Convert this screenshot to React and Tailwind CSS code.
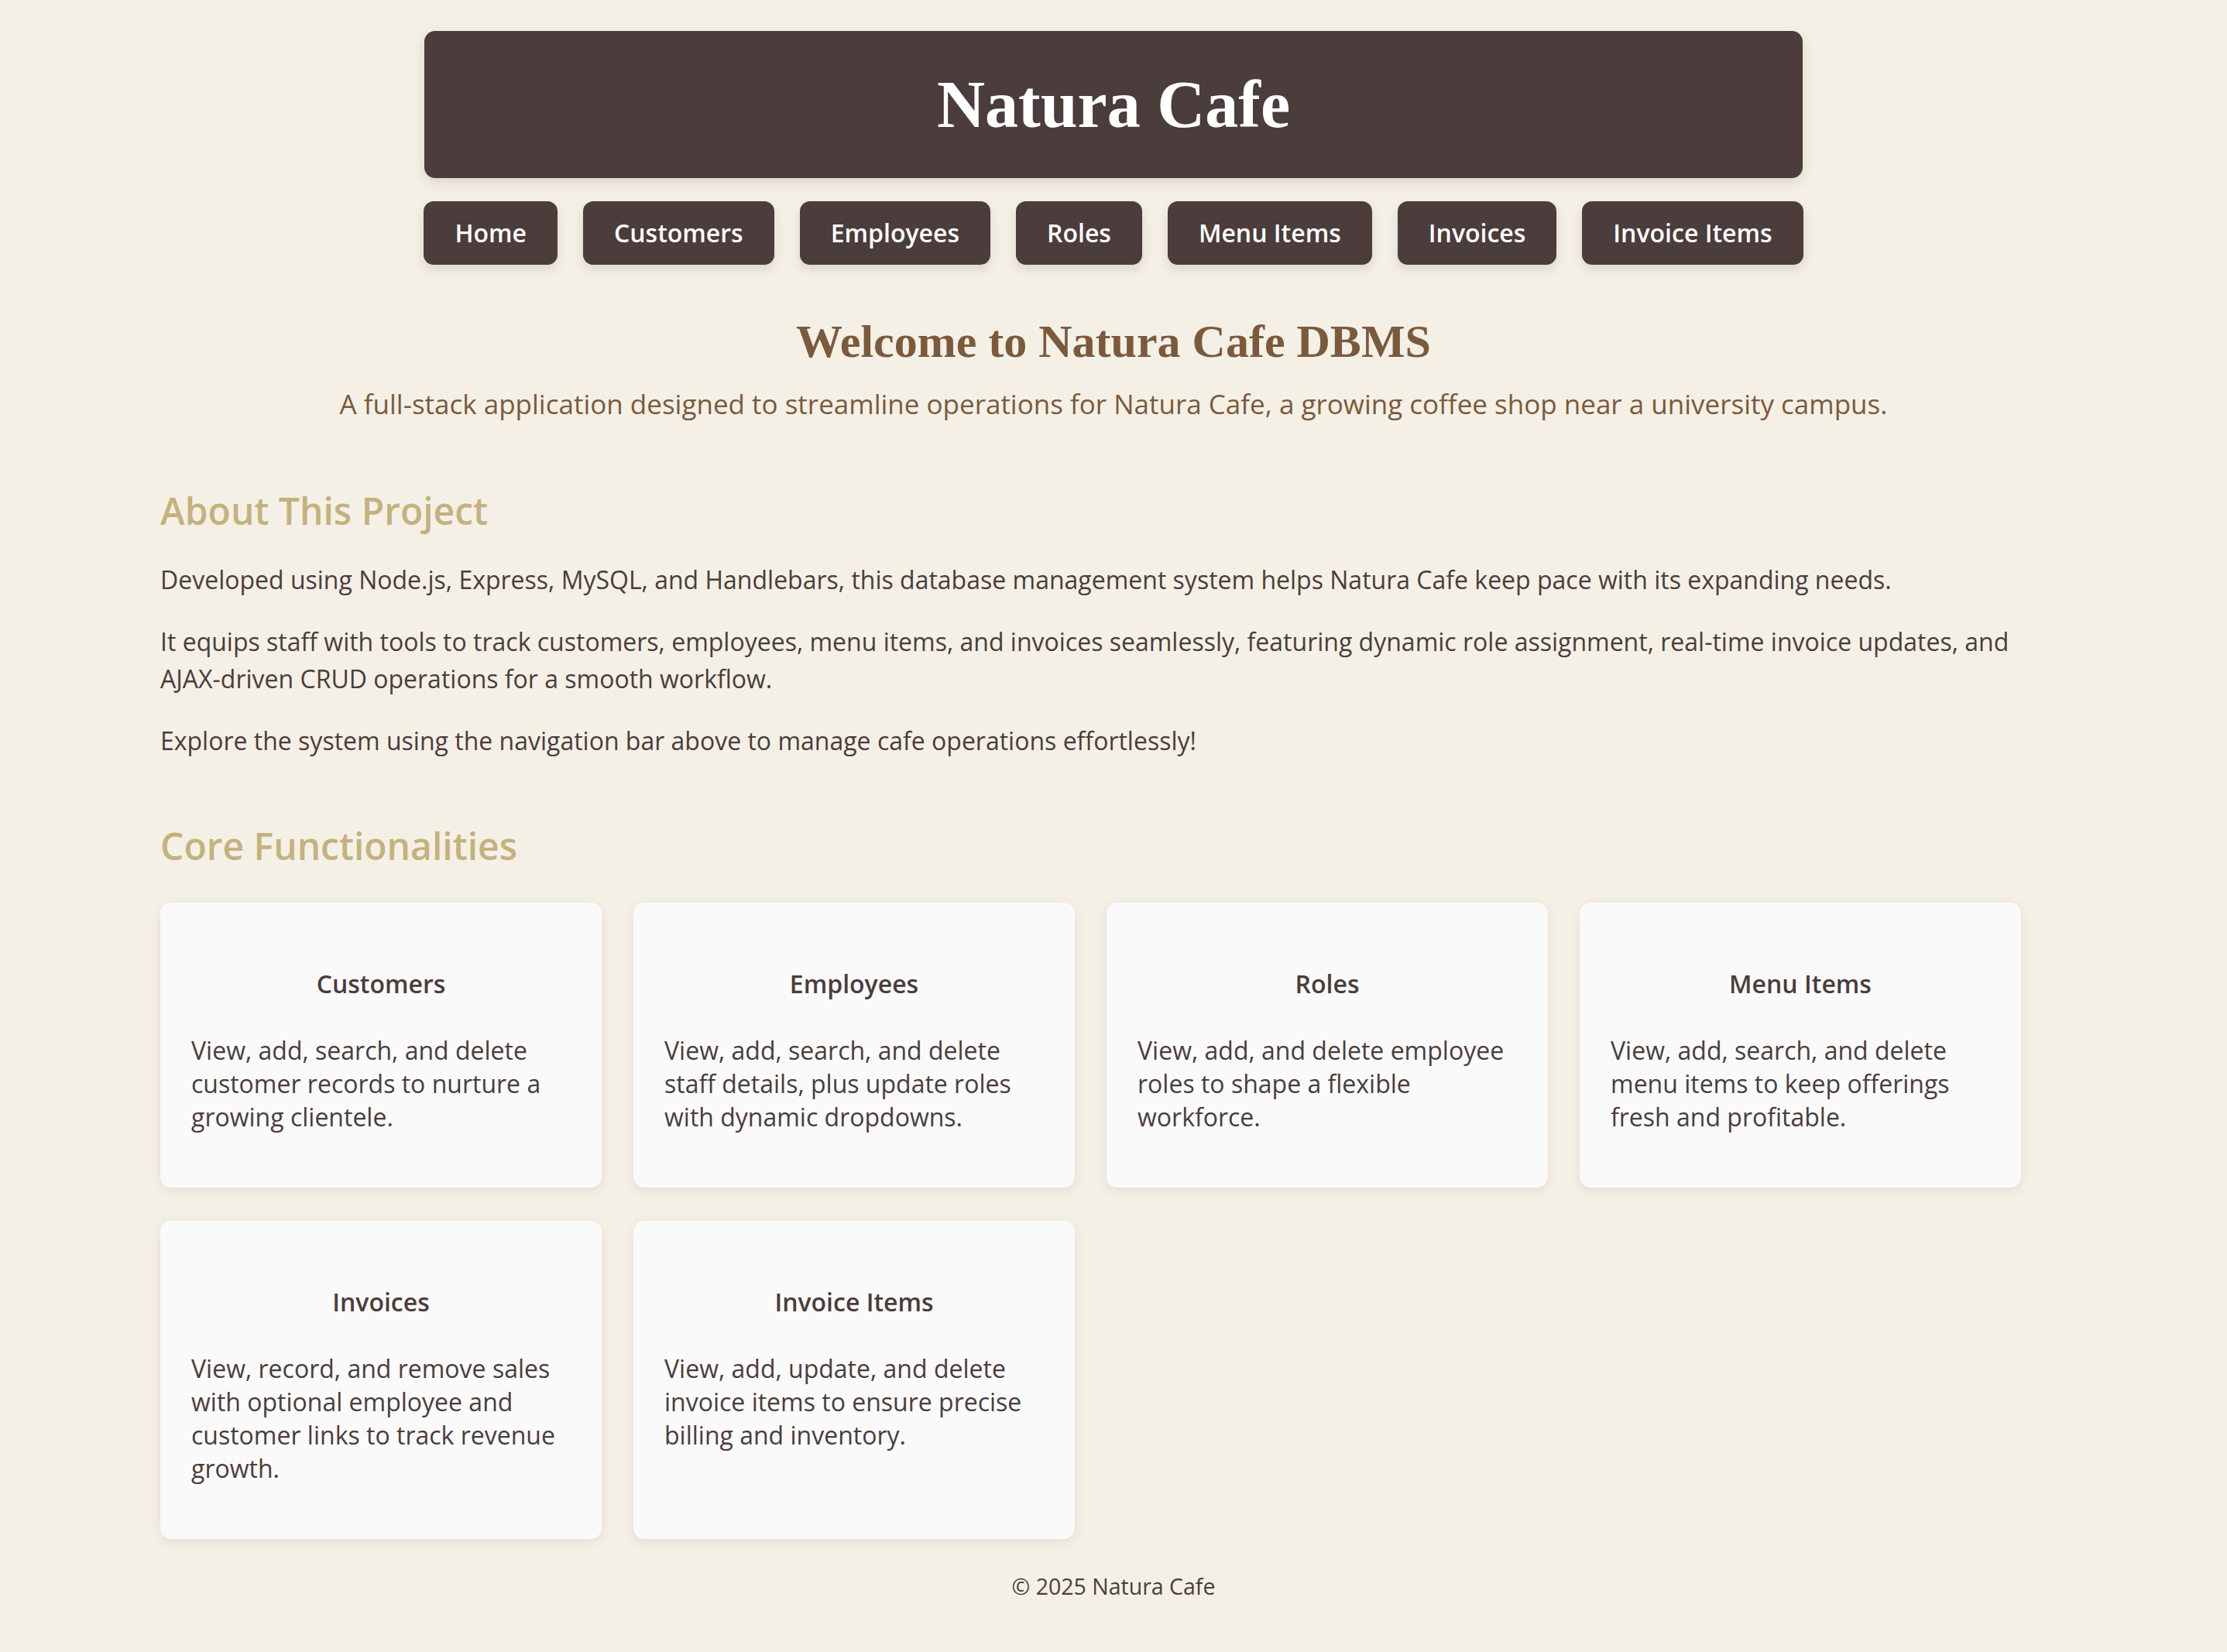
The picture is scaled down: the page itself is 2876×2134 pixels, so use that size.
const navLinks = ["Home", "Customers", "Employees", "Roles", "Menu Items", "Invoices", "Invoice Items"];

const features = [
  { title: "Customers", text: "View, add, search, and delete customer records to nurture a growing clientele." },
  { title: "Employees", text: "View, add, search, and delete staff details, plus update roles with dynamic dropdowns." },
  { title: "Roles", text: "View, add, and delete employee roles to shape a flexible workforce." },
  { title: "Menu Items", text: "View, add, search, and delete menu items to keep offerings fresh and profitable." },
  { title: "Invoices", text: "View, record, and remove sales with optional employee and customer links to track revenue growth." },
  { title: "Invoice Items", text: "View, add, update, and delete invoice items to ensure precise billing and inventory." },
];

const FeatureCard = ({ title, text }) => {
  return (
    <div className="bg-[#fafafa] rounded-[14px] shadow-[0_4px_14px_rgba(74,61,59,0.10)] px-[40px] pt-[81px] pb-[70px]">
      <h3 className="text-center text-[32px] leading-[47px] font-semibold text-[#4a3d3b]">{title}</h3>
      <p className="mt-[41px] text-[32px] leading-[43px] text-[#4a3d3b]">{text}</p>
    </div>
  );
};

export default function App() {
  return (
    <div className="min-h-screen bg-[#f5f0e6] font-['Open_Sans',sans-serif] text-[#4a3d3b] pt-[40px] pb-[67px]">
      <header className="mx-auto w-[1780px] h-[190px] flex items-center justify-center bg-[#4a3d3b] rounded-[14px] shadow-[0_6px_16px_rgba(74,61,59,0.15)]">
        <h1 className="font-['Liberation_Serif',serif] font-bold text-[86px] leading-none text-white">Natura Cafe</h1>
      </header>

      <nav className="mt-[30px] flex justify-center gap-[33px]">
        {navLinks.map((link) => (
          <a
            key={link}
            href="#"
            className="h-[82px] px-[40px] flex items-center bg-[#4a3d3b] rounded-[13px] text-white text-[32px] font-semibold shadow-[0_6px_14px_rgba(74,61,59,0.15)]"
          >
            {link}
          </a>
        ))}
      </nav>

      <section className="mt-[63px] text-center">
        <h2 className="font-['Liberation_Serif',serif] font-bold text-[60px] leading-[72px] text-[#7b5a3c]">
          Welcome to Natura Cafe DBMS
        </h2>
        <p className="mt-[19px] text-[35px] leading-[52px] text-[#7b5a3c]">
          A full-stack application designed to streamline operations for Natura Cafe, a growing coffee shop near a university campus.
        </p>
      </section>

      <main className="mx-auto w-[2462px]">
        <section className="mt-[81px]">
          <h2 className="text-[48px] leading-[62px] font-semibold text-[#c4b27e]">About This Project</h2>
          <div className="mt-[34px] flex flex-col gap-[32px] text-[32px] leading-[48px]">
            <p>Developed using Node.js, Express, MySQL, and Handlebars, this database management system helps Natura Cafe keep pace with its expanding needs.</p>
            <p>It equips staff with tools to track customers, employees, menu items, and invoices seamlessly, featuring dynamic role assignment, real-time invoice updates, and AJAX-driven CRUD operations for a smooth workflow.</p>
            <p>Explore the system using the navigation bar above to manage cafe operations effortlessly!</p>
          </div>
        </section>

        <section className="mt-[81px]">
          <h2 className="text-[48px] leading-[62px] font-semibold text-[#c4b27e]">Core Functionalities</h2>
          <div className="mt-[42px] grid grid-cols-[repeat(4,570px)] gap-x-[41px] gap-y-[43px]">
            {features.map((f) => (
              <FeatureCard key={f.title} title={f.title} text={f.text} />
            ))}
          </div>
        </section>
      </main>

      <footer className="mt-[40px] text-center text-[28.5px] leading-[43px]">© 2025 Natura Cafe</footer>
    </div>
  );
}
